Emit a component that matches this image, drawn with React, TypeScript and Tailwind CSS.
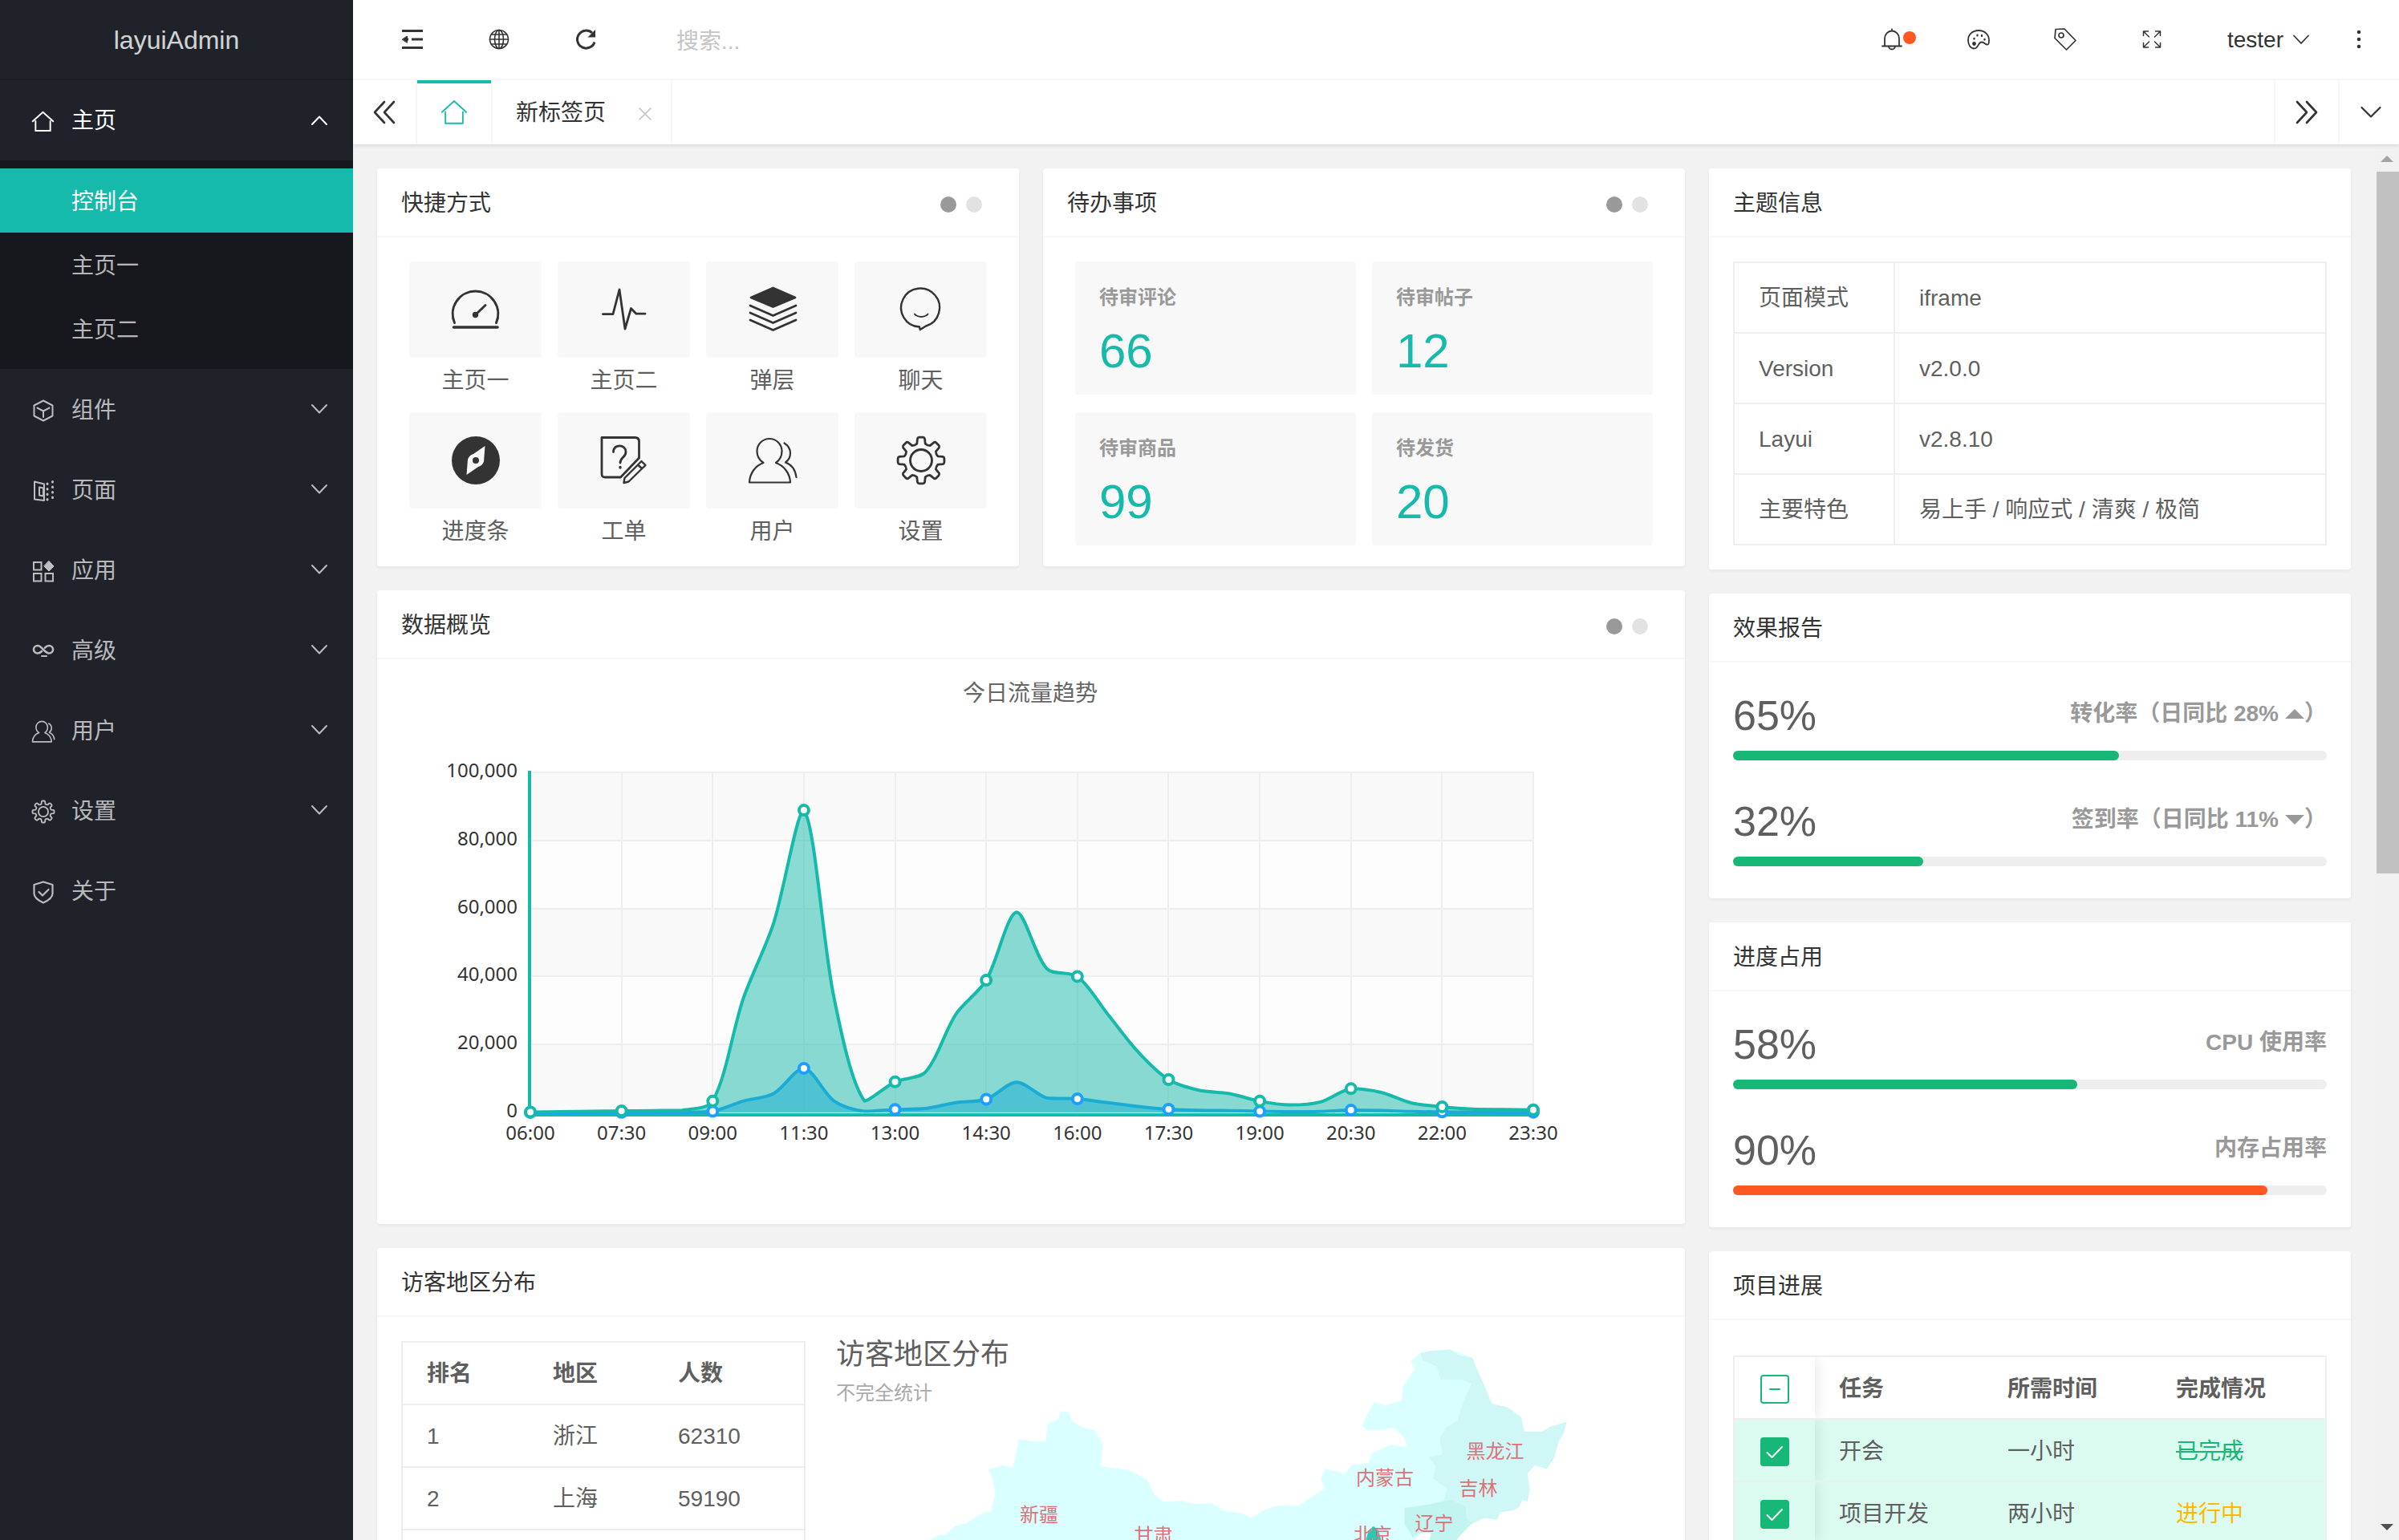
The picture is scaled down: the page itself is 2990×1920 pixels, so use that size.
import type { ReactNode } from "react"
import clsx from "clsx"

interface IconProps {
  size?: number
  box?: number
  width?: number
  className?: string
  children: ReactNode
}

function Icon({ size = 28, box = 28, width = 2, className, children }: IconProps) {
  return (
    <svg
      width={size}
      height={size}
      viewBox={`0 0 ${box} ${box}`}
      fill="none"
      stroke="currentColor"
      strokeWidth={width}
      strokeLinecap="round"
      strokeLinejoin="round"
      className={clsx("shrink-0 overflow-visible", className)}
    >
      {children}
    </svg>
  )
}

// 八齿齿轮
const gearPath = (() => {
  const at = (deg: number, r: number) => {
    const a = (deg * Math.PI) / 180
    return `${(30 + r * Math.cos(a)).toFixed(2)} ${(30 + r * Math.sin(a)).toFixed(2)}`
  }
  let d = ""
  for (let i = 0; i < 8; i++) {
    const a = i * 45
    d += `${i ? "L" : "M"}${at(a - 14, 21.5)} L${at(a - 9.5, 27.5)} Q${at(a - 8, 29)} ${at(a - 4.5, 29)} L${at(a + 4.5, 29)} Q${at(a + 8, 29)} ${at(a + 9.5, 27.5)} L${at(a + 14, 21.5)} Q${at(a + 22.5, 20)} ${at(a + 31, 21.5)} `
  }
  return d + "Z"
})()

const userShape = (
  <>
    <path d="M18.5 33C13 29.500 10.500 24 10.500 18.500a15.500 15.500 0 0 1 31 0C41.500 24 39 29.500 34 33C44 36.500 51.500 46 52 57.500H1C1.500 46 8.500 36.500 18.500 33Z" />
    <path d="M44.500 8.500C49.500 11.500 52 15.500 52 21c0 5-2.500 9-6 11.500C54 35.500 58.500 42 59.500 51" />
  </>
)

const HomeIcon = ({ size = 28, width = 2 }: { size?: number; width?: number }) => (
  <Icon size={size} width={width}>
    <path d="M0.800 13.800 14 1.800 27.200 13.800M4.500 13.500V26H23.500V13.500" strokeLinejoin="miter" />
  </Icon>
)

const menu = [
  {
    title: "组件",
    icon: (
      <Icon>
        <path d="M14 1.500 25.500 7.500V20.500L14 26.500 2.500 20.500V7.500ZM6.500 10.500 14 14.500 21.500 10.500M14 14.500V22" />
      </Icon>
    ),
  },
  {
    title: "页面",
    icon: (
      <Icon>
        <path d="M3 2.500 15 5.500V26L3 24.500ZM9 9.500 14 10.500V20.500L9 19.500Z" />
        <path d="M19 5V25M25.500 2.500V26" strokeWidth={3} strokeDasharray="0.500 6" />
      </Icon>
    ),
  },
  {
    title: "应用",
    icon: (
      <Icon>
        <path d="M2 3H11.500V12.500H2ZM2 17H11.500V26.500H2ZM16.500 17H26V26.500H16.500Z" strokeLinejoin="miter" />
        <path d="M21 1.500 27 8 21 14 15 8Z" fill="currentColor" strokeWidth={1} />
      </Icon>
    ),
  },
  {
    title: "高级",
    icon: (
      <Icon width={2.6}>
        <path d="M12 14C10.500 15.500 9 16.500 7 16.500a5 4.700 0 0 1 0-9.500C12 7 16 16.500 21 16.500a5 4.700 0 0 0 0-9.500C19 7 17.500 8 16 9.500" />
        <path d="M12 20H18" strokeWidth={2} />
      </Icon>
    ),
  },
  {
    title: "用户",
    icon: (
      <Icon box={60} width={3.4}>
        {userShape}
      </Icon>
    ),
  },
  {
    title: "设置",
    icon: (
      <Icon box={60} width={4}>
        <path d={gearPath} />
        <circle cx="30" cy="30" r="13" />
      </Icon>
    ),
  },
  {
    title: "关于",
    leaf: true,
    icon: (
      <Icon width={2.2}>
        <path d="M14 1.500 25.500 5V16c0 5-6 9-11.500 11.500C8.500 25 2.500 21 2.500 16V5ZM8.500 14 13 18.500 20.500 11" />
      </Icon>
    ),
  },
]

const shortcuts = [
  {
    title: "主页一",
    icon: (
      <Icon size={60} box={60} width={3}>
        <path d="M3.500 46.500A28.300 28.300 0 1 1 55.500 46.500" />
        <path d="M2.500 52H57" strokeWidth={3.6} />
        <path d="M30 36 42 24.500" />
        <circle cx="29.500" cy="36.500" r="2.200" fill="currentColor" />
      </Icon>
    ),
  },
  {
    title: "主页二",
    icon: (
      <Icon size={60} box={60} width={2.8}>
        <path d="M3.500 35.700H16L24 5 31 54 38.500 28.500 45 35.200H56" />
      </Icon>
    ),
  },
  {
    title: "弹层",
    icon: (
      <Icon size={60} box={60} width={2.8}>
        <path d="M30.500 3 58 15 30.500 26.500 3 15Z" fill="currentColor" />
        <path d="M2 25 30.500 37.500 59 25M2 34 30.500 46.500 59 34M2 43 30.500 55.500 59 43" />
      </Icon>
    ),
  },
  {
    title: "聊天",
    icon: (
      <Icon size={60} box={60} width={2.4}>
        <path d="M28 51.500A24 24 0 1 1 36 50.500L28.800 55Z" />
        <path d="M22 35.500C25.500 40 35 40 38.500 35.500" strokeWidth={2} />
      </Icon>
    ),
  },
  {
    title: "进度条",
    icon: (
      <Icon size={60} box={60}>
        <circle cx="30" cy="30" r="30" fill="currentColor" stroke="none" />
        <path d="M41.500 12 40 31.500A10.500 10.500 0 0 1 33 38L18.500 48 20 29A10.500 10.500 0 0 1 27 22Z" fill="#f8f8f8" stroke="none" />
        <circle cx="30" cy="30" r="4" fill="currentColor" stroke="none" />
      </Icon>
    ),
  },
  {
    title: "工单",
    icon: (
      <Icon size={60} box={60} width={2.8}>
        <path d="M2 1.500H43.500Q48.500 1.500 48.500 6.500V27L25.500 51H6Q2 51 2 47Z" />
        <path d="M16.500 19.500C16.500 9 32 9.500 32 19.500C32 26.500 25 26 25 33" />
        <path d="M25 38.500V39" strokeWidth={3.4} />
        <path d="M51.500 31 56.500 36 35.500 56.500 29.500 58 30.500 52ZM47 35.500 52 40" strokeWidth={2.4} />
      </Icon>
    ),
  },
  {
    title: "用户",
    icon: (
      <Icon size={60} box={60} width={2.2}>
        {userShape}
      </Icon>
    ),
  },
  {
    title: "设置",
    icon: (
      <Icon size={60} box={60} width={2.8}>
        <path d={gearPath} />
        <circle cx="30" cy="30" r="13.500" />
      </Icon>
    ),
  },
]

const todos = [
  { title: "待审评论", count: 66 },
  { title: "待审帖子", count: 12 },
  { title: "待审商品", count: 99 },
  { title: "待发货", count: 20 },
]

const themeInfo = [
  ["页面模式", "iframe"],
  ["Version", "v2.0.0"],
  ["Layui", "v2.8.10"],
  ["主要特色", "易上手 / 响应式 / 清爽 / 极简"],
]

const regionRows = [
  ["1", "浙江", "62310"],
  ["2", "上海", "59190"],
]

const tasks = [
  { name: "开会", time: "一小时", state: "已完成", done: true },
  { name: "项目开发", time: "两小时", state: "进行中", done: false },
]

interface CardProps {
  title: string
  dots?: boolean
  className?: string
  children: ReactNode
}

function Card({ title, dots, className, children }: CardProps) {
  return (
    <section className={clsx("shrink-0 rounded-sm bg-white shadow-[0_2px_4px_rgba(0,0,0,0.05)]", className)}>
      <header className="flex h-[86px] items-center justify-between border-b-2 border-[#f8f8f8] pt-[3px] pr-[46px] pl-[30px] text-[#333]">
        <h3>{title}</h3>
        {dots && (
          <div className="mt-[3px] flex gap-3">
            <span className="size-5 rounded-full bg-[#999]" />
            <span className="size-5 rounded-full bg-[#e2e2e2]" />
          </div>
        )}
      </header>
      {children}
    </section>
  )
}

interface MeterProps {
  value: number
  color?: string
  children: ReactNode
}

function Meter({ value, color = "bg-[#16b777]", children }: MeterProps) {
  return (
    <div className="h-[132px]">
      <div className="flex h-[92px] items-center justify-between pt-1">
        <span className="text-[52px] leading-none">{value}%</span>
        <span className="flex items-center pb-1 font-bold text-[#999]">{children}</span>
      </div>
      <div className="h-3 rounded-full bg-[#eee]">
        <div className={clsx("h-3 rounded-full", color)} style={{ width: `${value}%` }} />
      </div>
    </div>
  )
}

const pv = [
  111, 222, 333, 444, 555, 666, 3333, 33333, 55555, 88888, 33333, 3333, 8999, 11888, 28888, 38888, 58888, 42222, 39999,
  28888, 17777, 9666, 6555, 5555, 3333, 2222, 3111, 6999, 5888, 2777, 1666, 999, 888, 777,
]
const uv = [
  11, 22, 33, 44, 55, 66, 333, 3333, 5555, 13000, 3333, 333, 888, 1188, 2888, 3888, 8888, 4222, 3999, 2888, 1777, 966,
  655, 555, 333, 222, 311, 699, 588, 277, 166, 99, 88, 77,
]
const times = ["06:00", "07:30", "09:00", "11:30", "13:00", "14:30", "16:00", "17:30", "19:00", "20:30", "22:00", "23:30"]

const LEFT = 661
const RIGHT = 1911
const TOP = 963
const BASE = 1387
const SMOOTH = 0.3
const px = (i: number) => LEFT + (i * (RIGHT - LEFT)) / 33
const py = (v: number) => BASE - (v / 100000) * (BASE - TOP)

// 平滑曲线，控制点限制在相邻点的范围内
function smoothLine(data: number[]) {
  const pts = data.map((v, i) => [px(i), py(v)])
  const clamp = (v: number, a: number, b: number) => Math.max(Math.min(a, b), Math.min(Math.max(a, b), v))
  const ctrl = pts.map((p, i) => {
    if (i === 0 || i === pts.length - 1) return [p, p]
    const a = pts[i - 1]
    const b = pts[i + 1]
    const d0 = Math.hypot(p[0] - a[0], p[1] - a[1])
    const d1 = Math.hypot(p[0] - b[0], p[1] - b[1])
    const vx = (b[0] - a[0]) * SMOOTH
    const vy = (b[1] - a[1]) * SMOOTH
    const k0 = d0 / (d0 + d1)
    const k1 = d1 / (d0 + d1)
    return [
      [p[0] - vx * k0, clamp(p[1] - vy * k0, a[1], p[1])],
      [p[0] + vx * k1, clamp(p[1] + vy * k1, p[1], b[1])],
    ]
  })
  return pts
    .map((p, i) => (i === 0 ? `M${p[0]} ${p[1]}` : `C${ctrl[i - 1][1].join(" ")} ${ctrl[i][0].join(" ")} ${p.join(" ")}`))
    .join("")
}

function TrafficChart() {
  const pvLine = smoothLine(pv)
  const uvLine = smoothLine(uv)
  const close = `L${RIGHT} ${BASE}L${LEFT} ${BASE}Z`
  return (
    <svg width={1630} height={704} viewBox="470 822 1630 704" className="font-['Noto_Sans','Noto_Sans_CJK_SC',sans-serif]">
      <text x={1284} y={874} textAnchor="middle" fontSize={28} fill="#666">
        今日流量趋势
      </text>
      {[0, 1, 2, 3, 4].map((i) => (
        <rect key={i} x={LEFT} y={TOP + i * 84.8} width={RIGHT - LEFT} height={84.8} fill={i % 2 ? "#fdfdfd" : "#f9f9f9"} />
      ))}
      <g stroke="#eee" strokeWidth={2}>
        {[0, 1, 2, 3, 4].map((i) => (
          <path key={i} d={`M${LEFT} ${Math.round(TOP + i * 84.8)}H${RIGHT + 1}`} />
        ))}
        {times.map((t, i) => (
          <path key={t} d={`M${Math.round(px(i * 3))} ${TOP}V${BASE}`} />
        ))}
      </g>
      <path d={`M660 ${TOP - 2}V1392`} stroke="#16baaa" strokeWidth={4} />
      <path d="M658 1390H1912" stroke="#16baaa" strokeWidth={4} />
      <path d={uvLine + close} fill="#1e9fff" fillOpacity={0.5} />
      <path d={uvLine} fill="none" stroke="#1e9fff" strokeWidth={4} />
      <path d={pvLine + close} fill="#16baaa" fillOpacity={0.5} />
      <path d={pvLine} fill="none" stroke="#16baaa" strokeWidth={4} strokeLinejoin="round" />
      {[
        { data: uv, color: "#1e9fff" },
        { data: pv, color: "#16baaa" },
      ].map(({ data, color }) =>
        times.map((t, i) => (
          <circle key={color + t} cx={px(i * 3)} cy={py(data[i * 3])} r={6} fill="#fff" stroke={color} strokeWidth={4} />
        ))
      )}
      <g fontSize={24} fill="#333">
        {["100,000", "80,000", "60,000", "40,000", "20,000", "0"].map((t, i) => (
          <text key={t} x={645} y={969 + i * 84.8} textAnchor="end">
            {t}
          </text>
        ))}
        {times.map((t, i) => (
          <text key={t} x={px(i * 3)} y={1421} textAnchor="middle">
            {t}
          </text>
        ))}
      </g>
    </svg>
  )
}

const provinces = [
  { name: "黑龙江", x: 1863.5, y: 1818 },
  { name: "内蒙古", x: 1726, y: 1851 },
  { name: "吉林", x: 1842.5, y: 1864 },
  { name: "辽宁", x: 1787.5, y: 1908 },
  { name: "新疆", x: 1295, y: 1897 },
  { name: "甘肃", x: 1437.5, y: 1923 },
  { name: "北京", x: 1711, y: 1922 },
]

function RegionMap() {
  return (
    <svg width={1096} height={278} viewBox="1004 1642 1096 278" className="shrink-0 font-['Noto_Sans_CJK_SC',sans-serif]">
      <text x={1042} y={1701} fontSize={36} fill="#5f5f5f">
        访客地区分布
      </text>
      <text x={1042} y={1745} fontSize={24} fill="#aaa">
        不完全统计
      </text>
      <g transform="translate(1100 1640) scale(0.6441 0.3333)">
        <path
          fill="#d9fffe"
          d="M80 850 112 818 122 822 140 786 162 778 186 746 210 732 218 664 212 604 204 578 232 560 252 570 264 462 292 472 316 470 320 404 340 388 344 358 360 362 366 392 384 416 410 430 427 484 422 564 476 578 512 614 526 670 544 696 580 694 604 706 636 702 660 730 694 740 714 756 738 728 764 712 804 712 828 682 856 648 848 610 856 572 894 592 908 560 940 552 948 514 984 484 1014 492 1010 460 990 420 962 430 938 430 928 412 940 360 952 324 974 336 1004 318 1008 260 1030 200 1022 170 1040 142 1096 126 1140 156 1180 330 1140 480 1110 700 1060 860Z"
        />
        <path
          fill="#cef7f5"
          d="M1040 142 1060 132 1098 128 1116 150 1142 160 1152 210 1164 260 1178 330 1210 344 1236 380 1242 434 1276 434 1292 416 1324 398 1318 440 1308 474 1300 530 1286 574 1262 562 1248 590 1252 650 1248 696 1238 690 1232 716 1220 730 1196 736 1188 764 1164 758 1140 780 1100 740 1060 706 1086 692 1092 650 1066 610 1070 560 1056 530 1084 520 1078 462 1090 420 1112 394 1124 320 1140 256 1122 240 1080 240 1072 190 1046 170Z"
        />
        <path
          fill="#c2f4f0"
          d="M1010 720 1060 706 1100 690 1128 716 1130 760 1140 778 1112 836 1108 860 1056 860 1062 812 1040 812 1026 830 1010 780Z"
        />
        <path fill="#fff" d="M1030 840 1042 814 1062 812 1054 860 1022 860Z" />
        <path fill="#2ec7b5" d="M934 850 940 806 950 788 960 806 966 850Z" />
      </g>
      {provinces.map((p) => (
        <text key={p.name} x={p.x} y={p.y} textAnchor="middle" fontSize={24} fill="#e0707a">
          {p.name}
        </text>
      ))}
    </svg>
  )
}

function Sidebar() {
  return (
    <aside className="w-[440px] shrink-0 bg-[#20222a] text-white/70">
      <div className="flex h-[100px] items-center justify-center border-b-2 border-[#1b1d24] pt-0.5 text-[32px] text-white/80">
        layuiAdmin
      </div>
      <div className="flex h-[100px] items-center pr-8 pl-10 text-white">
        <span className="pt-0.5">
          <HomeIcon size={27} />
        </span>
        <span className="ml-[22px] pt-0.5">主页</span>
        <Icon size={20} box={20} className="ml-auto">
          <path d="M1 15 10 5.500 19 15" />
        </Icon>
      </div>
      <div className="bg-[#16181d] py-2.5">
        <div className="flex h-20 items-center bg-[#16baaa] pt-1 pl-[89px] text-white">控制台</div>
        <div className="flex h-20 items-center pt-1 pl-[89px]">主页一</div>
        <div className="flex h-20 items-center pt-1 pl-[89px]">主页二</div>
      </div>
      {menu.map((item) => (
        <div key={item.title} className="flex h-[100px] items-center pr-8 pl-10">
          <span className="mr-[21px] pt-1">{item.icon}</span>
          <span className="pt-[3px]">{item.title}</span>
          {!item.leaf && (
            <Icon size={20} box={20} className="ml-auto">
              <path d="M1 5 10 14.500 19 5" />
            </Icon>
          )}
        </div>
      ))}
    </aside>
  )
}

function TopBar() {
  return (
    <div className="flex h-[100px] items-center border-b-2 border-[#f6f6f6] pl-5 text-[#333]">
      <div className="flex w-[108px] justify-center">
        <Icon width={3}>
          <path d="M1 3.500H27M13 14H27M1 24.500H27" strokeLinecap="butt" />
          <path d="M1.500 14 7.500 10V18Z" fill="currentColor" strokeWidth={1} />
          <path d="M6 14H9" strokeLinecap="butt" />
        </Icon>
      </div>
      <div className="flex w-[108px] justify-center">
        <Icon width={1.6}>
          <circle cx="14" cy="14" r="11.500" />
          <ellipse cx="14" cy="14" rx="5.500" ry="11.500" />
          <path d="M2.500 14H25.500M14 2.500V25.500M4.500 8H23.500M4.500 20H23.500" />
        </Icon>
      </div>
      <div className="flex w-[108px] justify-center">
        <Icon width={3}>
          <path d="M25 17.500A11 11 0 1 1 22 6" strokeLinecap="butt" />
          <path d="M26 2V11.500H16.500Z" fill="currentColor" stroke="none" />
        </Icon>
      </div>
      <span className="ml-[59px] pt-1.5 text-[#c4c4c4]">搜索...</span>
      <div className="ml-auto flex items-center">
        <div className="relative flex w-[108px] justify-center">
          <Icon width={1.8}>
            <path d="M14 1.500V3.500M2 22.500H26M5 22.500V13A9 9.500 0 0 1 23 13V22.500M10 22.500A4 4 0 0 0 18 22.500" />
          </Icon>
          <span className="absolute top-1 left-[68px] size-4 rounded-full bg-[#ff5722]" />
        </div>
        <div className="flex w-[108px] justify-center">
          <Icon width={1.8}>
            <path d="M14 3C6.500 3 1 8 1 15c0 6 3 10.500 7.500 10.500c5.500 0 4.500-8 9.500-8c3.500 0 4.500 4 7.500 3c1.500-.5 1.500-3 1.500-5.500C27 8 21.500 3 14 3Z" />
            <circle cx="8.500" cy="19.500" r="1.500" fill="currentColor" />
            <path d="M8.500 13V13.400M12.500 8.800V9.200M18 9.300V9.700M21.500 14V14.400" strokeWidth={2.4} />
          </Icon>
        </div>
        <div className="flex w-[108px] justify-center">
          <Icon width={1.7}>
            <path d="M2 1.500 13 1 27 15.500 15.500 27 1 12.500Z" />
            <circle cx="9" cy="9" r="3" />
          </Icon>
        </div>
        <div className="flex w-[108px] justify-center">
          <Icon width={1.5}>
            <path d="M3.500 9.500V4H9.500M4 4.500 10.500 11M18.500 4H24.500V9.500M24 4.500 17.500 11M3.500 18.500V24H9.500M4 23.500 10.500 17M18.500 24H24.500V18.500M24 23.500 17.500 17" />
          </Icon>
        </div>
        <span className="ml-10 pt-0.5">tester</span>
        <Icon size={20} box={20} width={1.8} className="ml-3">
          <path d="M1 5.500 10 15 19 5.500" />
        </Icon>
        <svg width={28} height={28} viewBox="0 0 28 28" fill="#333" className="mr-9 ml-12">
          <circle cx="14" cy="5" r="2.300" />
          <circle cx="14" cy="14" r="2.300" />
          <circle cx="14" cy="23" r="2.300" />
        </svg>
      </div>
    </div>
  )
}

function TabBar() {
  return (
    <div className="flex h-20 items-stretch text-[#333]">
      <div className="flex w-20 items-center justify-center border-r-2 border-[#f6f6f6]">
        <Icon width={2.6}>
          <path d="M14 1 2 14 14 27M26 1 14 14 26 27" />
        </Icon>
      </div>
      <div className="flex w-[94px] items-center justify-center border-r-2 border-[#f6f6f6] text-[#16baaa] shadow-[inset_0_4px_0_#16baaa]">
        <HomeIcon size={32} width={1.6} />
      </div>
      <div className="flex w-56 items-center border-r-2 border-[#f6f6f6] pl-[29px]">
        <span className="pt-0.5">新标签页</span>
        <Icon size={18} box={18} width={1.6} className="mt-1 ml-10 text-[#c2c2c2]">
          <path d="M2 2 16 16M16 2 2 16" />
        </Icon>
      </div>
      <div className="ml-auto flex w-20 items-center justify-center border-l-2 border-[#f6f6f6]">
        <Icon width={2.6}>
          <path d="M2 1 14 14 2 27M14 1 26 14 14 27" />
        </Icon>
      </div>
      <div className="flex w-[76px] items-center border-l-2 border-[#f6f6f6] pl-[26px]">
        <Icon size={26} box={26} width={2.2}>
          <path d="M1.500 7 13 18.500 24.500 7" />
        </Icon>
      </div>
    </div>
  )
}

function CheckBox({ checked }: { checked?: boolean }) {
  return (
    <span
      className={clsx(
        "flex size-9 items-center justify-center rounded-[4px] border-2 border-[#16b777]",
        checked ? "bg-[#16b777] text-white" : "bg-white text-[#16b777]"
      )}
    >
      <Icon size={24} box={24}>
        <path d={checked ? "M2.500 13 8.500 19 21 6" : "M6 12H18"} />
      </Icon>
    </span>
  )
}

export default function App() {
  return (
    <div className="flex h-[1920px] w-[2990px] overflow-hidden bg-[#f2f2f2] font-['Liberation_Sans','Noto_Sans_CJK_SC',sans-serif] text-[28px] leading-[44px] text-[#5f5f5f]">
      <Sidebar />
      <div className="flex min-w-0 flex-1 flex-col">
        <div className="z-10 bg-white shadow-[0_2px_4px_rgba(0,0,0,0.1)]">
          <TopBar />
          <TabBar />
        </div>
        <div className="flex min-h-0 flex-1">
          <main className="flex flex-1 gap-[30px] pt-[30px] pl-[30px]">
            <div className="flex w-[1630px] flex-col gap-[30px]">
              <div className="flex gap-[30px]">
                <Card title="快捷方式" dots className="h-[496px] w-[800px]">
                  <div className="grid grid-cols-4 gap-x-5 px-10 pt-[30px]">
                    {shortcuts.map((s, i) => (
                      <div key={i} className="h-[188px]">
                        <div className="flex h-[120px] items-center justify-center rounded-sm bg-[#f8f8f8] text-[#333]">
                          {s.icon}
                        </div>
                        <p className="mt-[7px] text-center">{s.title}</p>
                      </div>
                    ))}
                  </div>
                </Card>
                <Card title="待办事项" dots className="h-[496px] w-[800px]">
                  <div className="grid grid-cols-2 gap-x-5 gap-y-[22px] px-10 pt-[30px]">
                    {todos.map((t) => (
                      <div key={t.title} className="h-[166px] rounded-sm bg-[#f8f8f8] px-[30px] pt-[23px]">
                        <h4 className="text-2xl leading-[44px] font-bold text-[#999]">{t.title}</h4>
                        <p className="mt-[15px] text-[60px] leading-[60px] text-[#16baaa]">{t.count}</p>
                      </div>
                    ))}
                  </div>
                </Card>
              </div>
              <Card title="数据概览" dots className="h-[790px]">
                <TrafficChart />
              </Card>
              <Card title="访客地区分布" className="h-[800px]">
                <div className="flex">
                  <div className="mt-[30px] ml-[30px] h-[640px] w-[504px] shrink-0 border-2 border-[#eee]">
                    <div className="grid h-[78px] grid-cols-[157px_156px_1fr] items-center border-b-2 border-[#eee] pt-0.5 pl-[30px] font-bold">
                      <span>排名</span>
                      <span>地区</span>
                      <span>人数</span>
                    </div>
                    {regionRows.map((r) => (
                      <div
                        key={r[0]}
                        className="grid h-[78px] grid-cols-[157px_156px_1fr] items-center border-b-2 border-[#eee] pt-0.5 pl-[30px]"
                      >
                        <span>{r[0]}</span>
                        <span>{r[1]}</span>
                        <span>{r[2]}</span>
                      </div>
                    ))}
                  </div>
                  <RegionMap />
                </div>
              </Card>
            </div>
            <div className="flex w-[800px] flex-col gap-[30px]">
              <Card title="主题信息" className="h-[500px]">
                <div className="mx-[30px] mt-[30px] border-2 border-b-0 border-[#eee]">
                  {themeInfo.map(([k, v]) => (
                    <div key={k} className="flex h-[88px] items-stretch border-b-2 border-[#eee]">
                      <span className="flex w-[200px] items-center border-r-2 border-[#eee] pt-0.5 pl-[30px]">{k}</span>
                      <span className="flex items-center pt-0.5 pl-[30px]">{v}</span>
                    </div>
                  ))}
                </div>
              </Card>
              <Card title="效果报告" className="h-[380px]">
                <div className="px-[30px] pt-[18px]">
                  <Meter value={65}>
                    转化率（日同比 28%
                    <svg width={24} height={14} viewBox="0 0 24 14" fill="#999" className="ml-2">
                      <path d="M0 13 12 1 24 13Z" />
                    </svg>
                    ）
                  </Meter>
                  <Meter value={32}>
                    签到率（日同比 11%
                    <svg width={24} height={14} viewBox="0 0 24 14" fill="#999" className="ml-2">
                      <path d="M0 1 12 13 24 1Z" />
                    </svg>
                    ）
                  </Meter>
                </div>
              </Card>
              <Card title="进度占用" className="h-[380px]">
                <div className="px-[30px] pt-[18px]">
                  <Meter value={58}>CPU 使用率</Meter>
                  <Meter value={90} color="bg-[#ff5722]">
                    内存占用率
                  </Meter>
                </div>
              </Card>
              <Card title="项目进展" className="h-[600px]">
                <div className="mx-[30px] mt-11 border-2 border-[#eee]">
                  <div className="flex h-[78px] items-stretch border-b-2 border-[#eee] font-bold">
                    <div className="z-10 flex w-[100px] items-center justify-center pt-1 shadow-[2px_0_16px_rgba(0,0,0,0.1)] [clip-path:inset(0_-20px_0_0)]">
                      <CheckBox />
                    </div>
                    <span className="flex w-[210px] items-center pt-1 pl-[30px]">任务</span>
                    <span className="flex w-[210px] items-center pt-1 pl-[30px]">所需时间</span>
                    <span className="flex items-center pt-1 pl-[30px]">完成情况</span>
                  </div>
                  {tasks.map((t) => (
                    <div key={t.name} className="flex h-[78px] items-stretch border-b-2 border-[#eee] bg-[#dbfbf0]">
                      <div className="z-10 flex w-[100px] items-center justify-center pt-1 shadow-[2px_0_16px_rgba(0,0,0,0.1)] [clip-path:inset(0_-20px_0_0)]">
                        <CheckBox checked />
                      </div>
                      <span className="flex w-[210px] items-center pt-1 pl-[30px]">{t.name}</span>
                      <span className="flex w-[210px] items-center pt-1 pl-[30px]">{t.time}</span>
                      <span
                        className={clsx("flex items-center pt-1 pl-[30px]", t.done ? "text-[#16b777]" : "text-[#ffb800]")}
                      >
                        <span className={clsx(t.done && "line-through")}>{t.state}</span>
                      </span>
                    </div>
                  ))}
                </div>
              </Card>
            </div>
          </main>
          <div className="flex w-[30px] flex-col items-center bg-[#f1f1f1] pt-3.5 pb-3">
            <svg width={16} height={8} viewBox="0 0 16 8" fill="#a3a3a3">
              <path d="M0 8 8 0 16 8Z" />
            </svg>
            <div className="mt-3 h-[875px] w-[28px] self-end bg-[#c1c1c1]" />
            <svg width={16} height={8} viewBox="0 0 16 8" fill="#505050" className="mt-auto">
              <path d="M0 0 8 8 16 0Z" />
            </svg>
          </div>
        </div>
      </div>
    </div>
  )
}
